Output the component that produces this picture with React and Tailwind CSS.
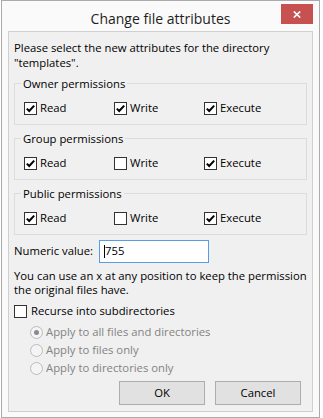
function Check({ checked }) {
  return (
    <span className="flex h-[13px] w-[13px] shrink-0 items-center justify-center border border-[#333333] bg-white">
      {checked && (
        <svg width="11" height="11" viewBox="0 0 11 11">
          <path d="M1.8 5.6 L4.2 8 L9.2 2.6" fill="none" stroke="#000" strokeWidth="2" />
        </svg>
      )}
    </span>
  );
}

function CheckItem({ label, checked }) {
  return (
    <div className="flex w-[90px] items-center gap-[3px]">
      <Check checked={checked} />
      <span>{label}</span>
    </div>
  );
}

function Group({ title, perms, className }) {
  return (
    <fieldset className={`border border-[#dcdcdc] p-0 ${className}`}>
      <legend className="ml-[6px] px-[2px] leading-[15px]">{title}</legend>
      <div className="flex h-[15px] items-center pb-0 pl-[9px] mt-[10px] mb-[8px]">
        <CheckItem label="Read" checked={perms[0]} />
        <CheckItem label="Write" checked={perms[1]} />
        <CheckItem label="Execute" checked={perms[2]} />
      </div>
    </fieldset>
  );
}

function Radio({ label, selected }) {
  return (
    <div className="flex h-[18px] items-center gap-[3px] pl-[16px] text-[#838383]">
      <span className="flex h-[13px] w-[13px] items-center justify-center rounded-full border border-[#bcbcbc] bg-[#f4f4f4]">
        {selected && <span className="h-[5px] w-[5px] rounded-full bg-[#8a8a8a]" />}
      </span>
      <span>{label}</span>
    </div>
  );
}

export default function App() {
  return (
    <div className="h-[418px] w-[323px] bg-white font-['Open_Sans',sans-serif] text-[11.3px] text-black">
      <div className="relative ml-[1px] flex h-[418px] w-[319px] flex-col border border-[#ababab] bg-[#fafafa] px-[6px]">
        <div className="flex h-[30px] items-center justify-center pt-[5px] text-[14px] text-[#1e1e1e]">
          Change file attributes
        </div>
        <button
          type="button"
          className="absolute right-[6px] top-[3px] flex h-[20px] w-[32px] items-center justify-center bg-[#c75050]"
        >
          <svg width="8" height="7" viewBox="0 0 8 7">
            <path d="M0.8 0.5 L7.2 6.5 M7.2 0.5 L0.8 6.5" stroke="#fff" strokeWidth="1.7" />
          </svg>
        </button>

        <div className="flex h-[381px] flex-col border border-[#cfcfcf] bg-[#f0f0f0] px-[5px] pt-[8px]">
          <p className="leading-[15px]">
            Please select the new attributes for the directory
            <br />
            "templates".
          </p>

          <Group title="Owner permissions" perms={[true, true, true]} className="mt-[6px]" />
          <Group title="Group permissions" perms={[true, false, true]} className="mt-[6px]" />
          <Group title="Public permissions" perms={[true, false, true]} className="mt-[6px]" />

          <div className="mt-[5px] flex items-center">
            <span className="w-[85px] shrink-0">Numeric value:</span>
            <div className="flex h-[23px] w-[110px] items-center border border-[#569de5] bg-white pl-[4px]">
              <span className="h-[13px] w-[1px] bg-black" />
              <span>755</span>
            </div>
          </div>

          <p className="mt-[6px] leading-[14px] whitespace-nowrap">
            You can use an x at any position to keep the permission
            <br />
            the original files have.
          </p>

          <div className="mt-[7px] flex h-[15px] items-center gap-[4px]">
            <Check checked={false} />
            <span>Recurse into subdirectories</span>
          </div>

          <div className="mt-[4px] flex flex-col">
            <Radio label="Apply to all files and directories" selected />
            <Radio label="Apply to files only" />
            <Radio label="Apply to directories only" />
          </div>

          <div className="mt-[4px] flex justify-end gap-[10px] pr-[6px]">
            <button type="button" className="h-[24px] w-[86px] border border-[#adadad] bg-[#e1e1e1]">
              OK
            </button>
            <button type="button" className="h-[24px] w-[86px] border border-[#adadad] bg-[#e1e1e1]">
              Cancel
            </button>
          </div>
        </div>
      </div>
    </div>
  );
}
